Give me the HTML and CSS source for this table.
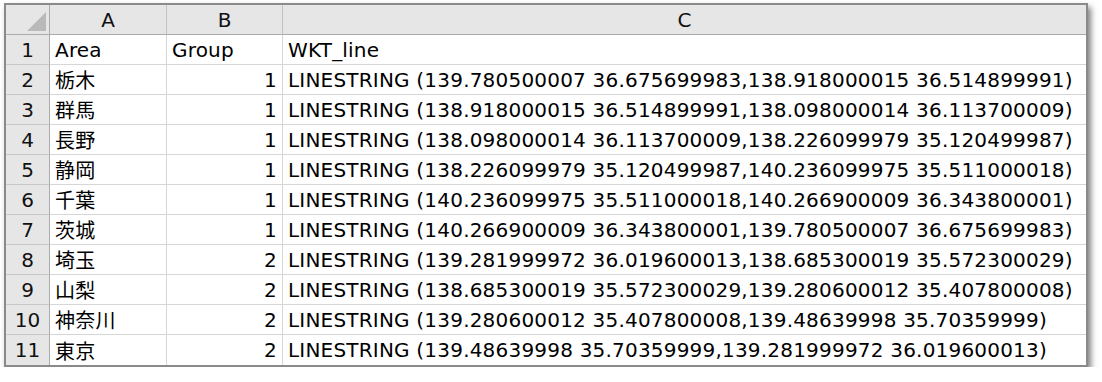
FILE: index.html
```html
<!DOCTYPE html>
<html lang="ja">
<head>
<meta charset="utf-8">
<link rel="stylesheet" href="styles.css">
</head>
<body>
<div class="sheet">
  <div class="hd corner"><span class="tri"></span></div>
  <div class="hd col">A</div>
  <div class="hd col">B</div>
  <div class="hd col last">C</div>

  <div class="hd rn">1</div><div class="c">Area</div><div class="c">Group</div><div class="c last">WKT_line</div>
  <div class="hd rn">2</div><div class="c">栃木</div><div class="c num">1</div><div class="c last">LINESTRING (139.780500007 36.675699983,138.918000015 36.514899991)</div>
  <div class="hd rn">3</div><div class="c">群馬</div><div class="c num">1</div><div class="c last">LINESTRING (138.918000015 36.514899991,138.098000014 36.113700009)</div>
  <div class="hd rn">4</div><div class="c">長野</div><div class="c num">1</div><div class="c last">LINESTRING (138.098000014 36.113700009,138.226099979 35.120499987)</div>
  <div class="hd rn">5</div><div class="c">静岡</div><div class="c num">1</div><div class="c last">LINESTRING (138.226099979 35.120499987,140.236099975 35.511000018)</div>
  <div class="hd rn">6</div><div class="c">千葉</div><div class="c num">1</div><div class="c last">LINESTRING (140.236099975 35.511000018,140.266900009 36.343800001)</div>
  <div class="hd rn">7</div><div class="c">茨城</div><div class="c num">1</div><div class="c last">LINESTRING (140.266900009 36.343800001,139.780500007 36.675699983)</div>
  <div class="hd rn">8</div><div class="c">埼玉</div><div class="c num">2</div><div class="c last">LINESTRING (139.281999972 36.019600013,138.685300019 35.572300029)</div>
  <div class="hd rn">9</div><div class="c">山梨</div><div class="c num">2</div><div class="c last">LINESTRING (138.685300019 35.572300029,139.280600012 35.407800008)</div>
  <div class="hd rn">10</div><div class="c">神奈川</div><div class="c num">2</div><div class="c last">LINESTRING (139.280600012 35.407800008,139.48639998 35.70359999)</div>
  <div class="hd rn lastrow">11</div><div class="c lastrow">東京</div><div class="c num lastrow">2</div><div class="c last lastrow">LINESTRING (139.48639998 35.70359999,139.281999972 36.019600013)</div>
</div>
</body>
</html>
```

FILE: styles.css
```css
html, body {
  margin: 0;
  padding: 0;
  background: #ffffff;
}

body {
  padding: 3px 0 0 4px;
}

.sheet {
  width: 1080px;
  display: grid;
  grid-template-columns: 44px 117px 116px 1fr;
  grid-auto-rows: 30px;
  border: 2px solid #8a8a8a;
  box-shadow: 3px 4px 6px rgba(0, 0, 0, 0.5);
  font-family: "DejaVu Sans", "Noto Sans CJK JP", sans-serif;
  font-size: 20px;
  color: #000;
  background: #fff;
}

.c {
  border-right: 1px solid #d6d6d6;
  border-bottom: 1px solid #d6d6d6;
  padding: 0 4px 0 5px;
  display: flex;
  align-items: center;
  white-space: nowrap;
  overflow: hidden;
  letter-spacing: 0.2px;
}

.c.num {
  justify-content: flex-end;
  padding-right: 5px;
}

.c.last {
  border-right: none;
}

.lastrow {
  border-bottom: none !important;
}

.hd {
  background: #e6e6e6;
  color: #111;
  display: flex;
  align-items: center;
  justify-content: center;
  border-right: 1px solid #c2c2c2;
  border-bottom: 1px solid #c2c2c2;
}

.hd.col {
  border-bottom: 1px solid #ababab;
}

.hd.col.last {
  border-right: none;
}

.hd.rn {
  border-right: 1px solid #ababab;
  border-bottom: 1px solid #c8c8c8;
}

.hd.corner {
  position: relative;
  border-right: 1px solid #ababab;
  border-bottom: 1px solid #ababab;
}

.tri {
  position: absolute;
  right: 3px;
  bottom: 3px;
  width: 0;
  height: 0;
  border-left: 19px solid transparent;
  border-bottom: 19px solid #b9b9b9;
}
```
